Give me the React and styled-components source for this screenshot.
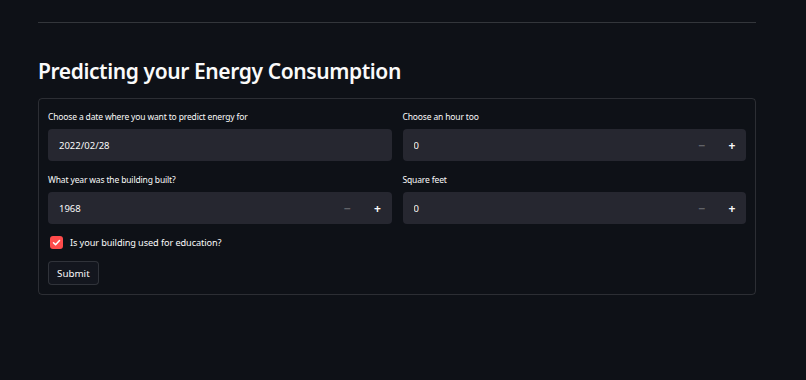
import React, {useState} from "react";
import styled, {createGlobalStyle} from "styled-components";

const GlobalStyle = createGlobalStyle`
  body {
    margin: 0;
    background-color: #0e1117;
    color: #fafafa;
    font-family: "Noto Sans", "Open Sans", sans-serif;
  }
`;

const Page = styled.div`
  width: 718px;
  padding: 22px 0 0 38px;
  min-height: 358px;
`;

const Divider = styled.hr`
  margin: 0;
  border: none;
  border-top: 1px solid rgba(250, 250, 250, 0.16);
`;

const Title = styled.h1`
  margin: 33px 0 0;
  font-size: 21px;
  font-weight: 600;
  line-height: 30px;
  letter-spacing: -0.4px;
`;

const Form = styled.div`
  margin-top: 12px;
  border: 1px solid rgba(250, 250, 250, 0.13);
  border-radius: 4px;
  padding: 10px 9px 9px;
  display: flex;
  flex-direction: column;
`;

const Grid = styled.div`
  display: grid;
  grid-template-columns: 1fr 1fr;
  column-gap: 11px;
  row-gap: 11px;
`;

const Field = styled.div`
  display: flex;
  flex-direction: column;
  gap: 4px;
`;

const Label = styled.label`
  font-size: 8.5px;
  line-height: 16px;
  letter-spacing: -0.15px;
  color: #fafafa;
`;

const InputBox = styled.div`
  height: 32px;
  background-color: #262730;
  border-radius: 4px;
  display: flex;
  align-items: center;
`;

const Input = styled.input`
  flex: 1;
  min-width: 0;
  height: 100%;
  border: none;
  outline: none;
  background: transparent;
  color: #fafafa;
  font-family: inherit;
  font-size: 9.5px;
  padding: 0 11px;
`;

const Steps = styled.div`
  display: flex;
  gap: 2px;
  height: 100%;
`;

const Step = styled.button`
  width: 28px;
  height: 100%;
  border: none;
  background: transparent;
  color: ${({$dim}) => ($dim ? "rgba(250,250,250,0.3)" : "#fafafa")};
  font-family: inherit;
  font-size: 12px;
  font-weight: 700;
  padding: 0;
  cursor: pointer;
  display: flex;
  align-items: center;
  justify-content: center;
`;

const CheckRow = styled.label`
  margin-top: 10px;
  height: 16px;
  display: flex;
  align-items: center;
  gap: 7px;
  padding-left: 2px;
  font-size: 9.2px;
  letter-spacing: -0.1px;
  cursor: pointer;
`;

const Box = styled.span`
  width: 13px;
  height: 13px;
  border-radius: 3px;
  background-color: ${({$on}) => ($on ? "#ff4b4b" : "transparent")};
  border: ${({$on}) => ($on ? "none" : "1px solid rgba(250,250,250,0.4)")};
  display: flex;
  align-items: center;
  justify-content: center;
`;

const Submit = styled.button`
  margin-top: 11px;
  align-self: flex-start;
  height: 24px;
  padding: 0 8px;
  border-radius: 4px;
  border: 1px solid rgba(250, 250, 250, 0.13);
  background-color: #13161e;
  color: #fafafa;
  font-family: inherit;
  font-size: 9.8px;
  cursor: pointer;
`;

const NumberInput = ({value}) => (
    <InputBox>
        <Input type="text" defaultValue={value}/>
        <Steps>
            <Step $dim>&minus;</Step>
            <Step>+</Step>
        </Steps>
    </InputBox>
);

const App = () => {
    const [edu, setEdu] = useState(true);

    return (
        <>
            <GlobalStyle/>
            <Page>
                <Divider/>
                <Title>Predicting your Energy Consumption</Title>
                <Form>
                    <Grid>
                        <Field>
                            <Label>Choose a date where you want to predict energy for</Label>
                            <InputBox>
                                <Input type="text" defaultValue="2022/02/28"/>
                            </InputBox>
                        </Field>
                        <Field>
                            <Label>Choose an hour too</Label>
                            <NumberInput value="0"/>
                        </Field>
                        <Field>
                            <Label>What year was the building built?</Label>
                            <NumberInput value="1968"/>
                        </Field>
                        <Field>
                            <Label>Square feet</Label>
                            <NumberInput value="0"/>
                        </Field>
                    </Grid>
                    <CheckRow onClick={() => setEdu(!edu)}>
                        <Box $on={edu}>
                            {edu && (
                                <svg width="9" height="9" viewBox="0 0 24 24" fill="none" stroke="#fff" strokeWidth="4" strokeLinecap="round" strokeLinejoin="round">
                                    <polyline points="4 12.5 9.5 18 20 6.5"/>
                                </svg>
                            )}
                        </Box>
                        Is your building used for education?
                    </CheckRow>
                    <Submit>Submit</Submit>
                </Form>
            </Page>
        </>
    );
};

export default App;
